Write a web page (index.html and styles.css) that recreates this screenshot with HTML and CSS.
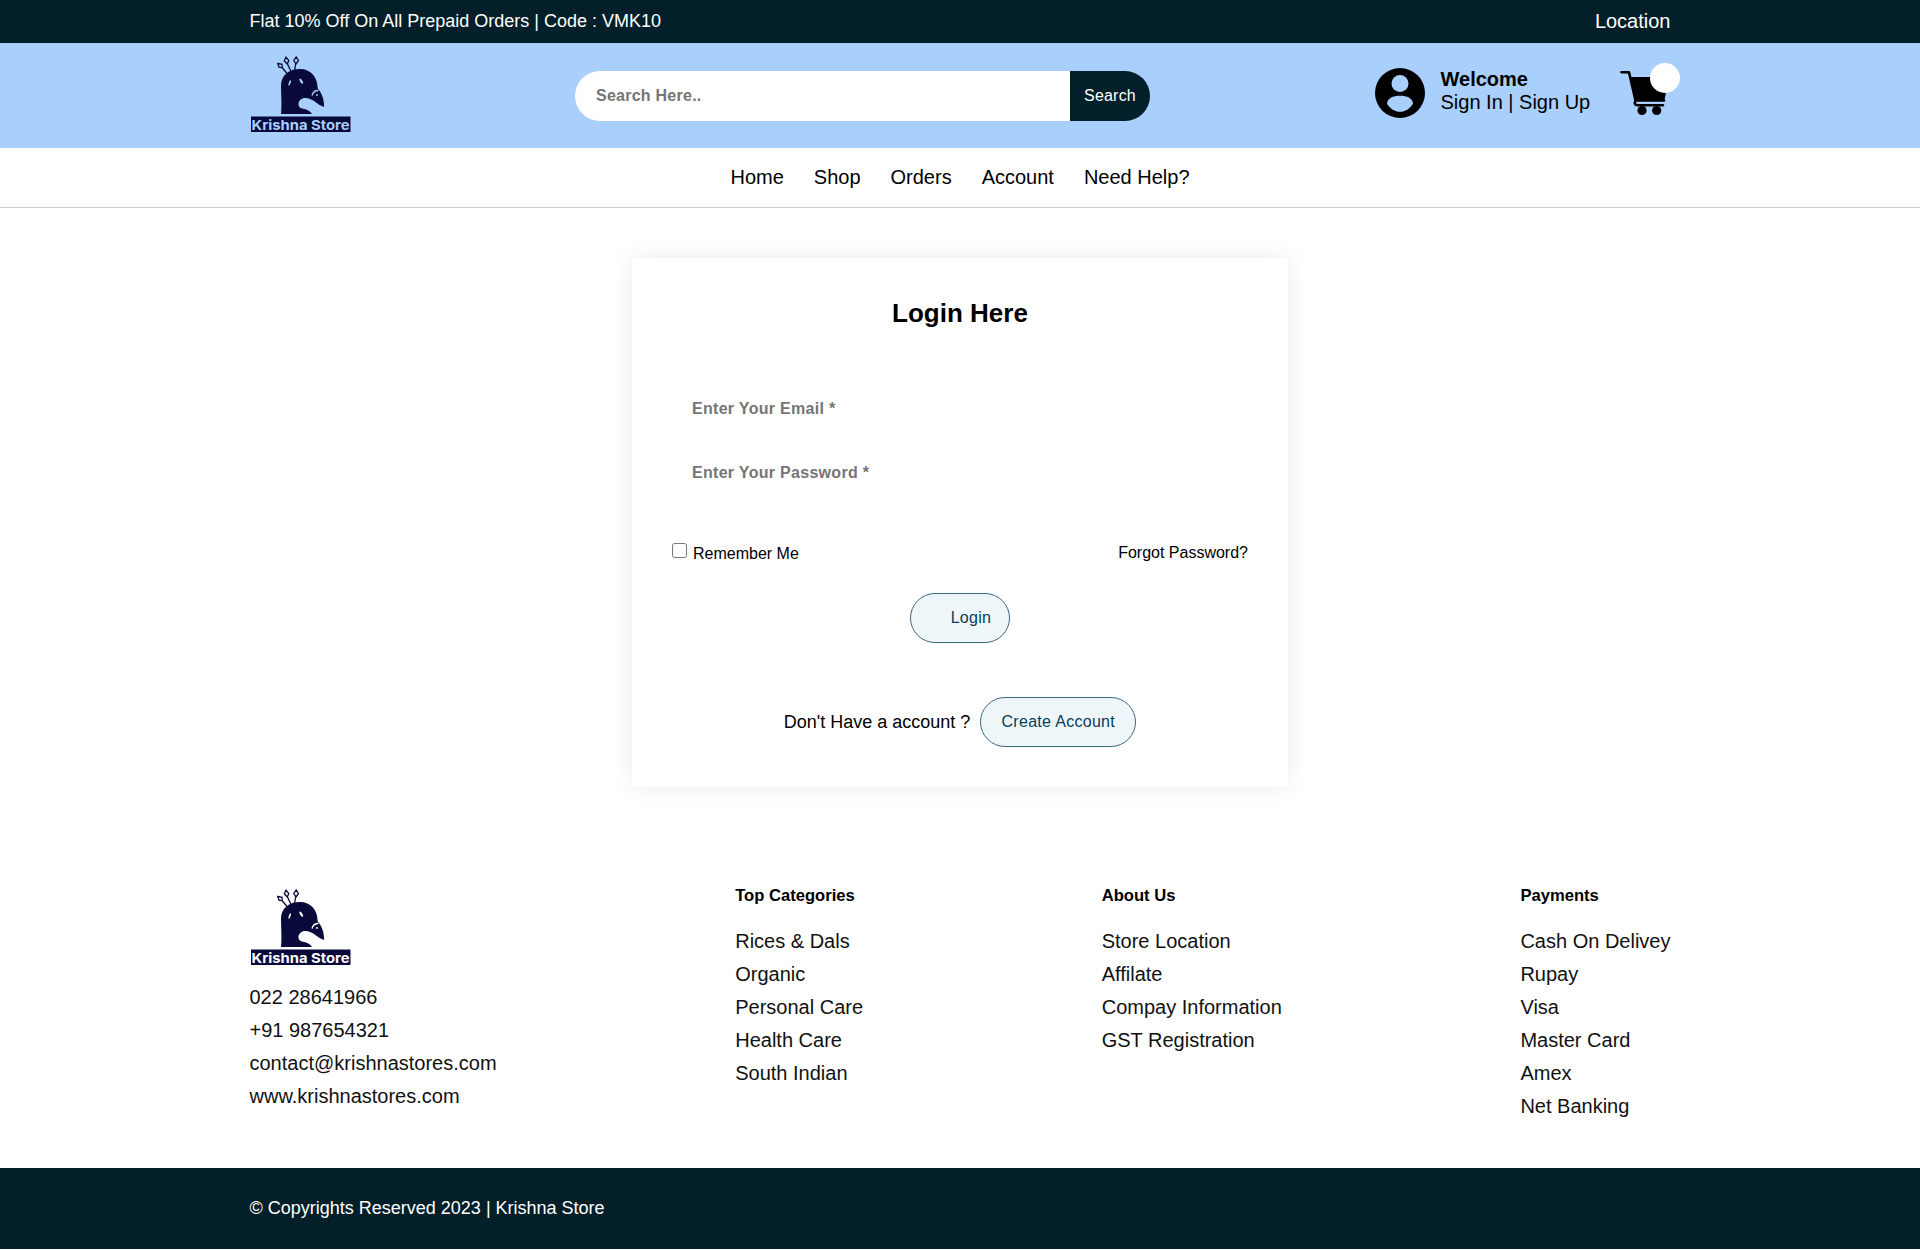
FILE: index.html
```html
<!DOCTYPE html>
<html lang="en">
<head>
<meta charset="utf-8">
<title>Krishna Store</title>
<link rel="stylesheet" href="styles.css">
</head>
<body>
<div class="topbar"><div class="container between">
  <span class="offer">Flat 10% Off On All Prepaid Orders | Code : VMK10</span>
  <a class="location">Location</a>
</div></div>

<header class="header"><div class="container header-row">
  <svg class="logo" viewBox="0 0 102 80">
    <g id="bird">
      <path fill="none" stroke="#090a3b" stroke-width="1.3" d="M37 18.500 32 12.500M41 16.500 37.500 9M44.500 15.500 45.700 9M27.800 8.500 32 9.300 32.300 12.800 29 12.200ZM36 2.200 38.800 5.500 37.300 9 34.300 5.800ZM46.200 2 48.500 5.500 46 9 43.800 5.500Z"/>
      <path fill="#090a3b" d="M31 59C32 50 31 38 31 31C31 20 39 14 50 14C61 14 67.500 22 67.700 33.500C71.500 37 74.500 45 74 52Q70 51 66 47.500Q60 42.500 54 43C47.500 44 46.500 52.500 52 53.500Q59.500 54.500 62 59Z"/>
      <path fill="none" stroke="currentColor" stroke-width="1.300" d="M62 40.500Q63.500 35.300 68.500 35.500"/>
      <g fill="currentColor"><ellipse cx="39.700" cy="28" rx=".9" ry="2.800" transform="rotate(20 39.700 28)"/><ellipse cx="51.200" cy="26.200" rx="1.200" ry="2.900" transform="rotate(-32 51.200 26.200)"/><circle cx="67" cy="40" r=".9"/></g>
      <path fill="#090a3b" d="M1 61.500H100.500V77H1Z"/>
    </g>
    <text class="logo-text" x="1.500" y="75" textLength="98" lengthAdjust="spacingAndGlyphs" fill="currentColor">Krishna Store</text>
  </svg>
  <form class="search">
    <input class="search-input" type="text" placeholder="Search Here..">
    <button class="search-btn" type="button">Search</button>
  </form>
  <div class="user">
    <svg class="avatar" viewBox="0 0 50 50"><circle cx="25" cy="25" r="25"/><circle cx="25" cy="15.500" r="8.500" fill="#a9cffd"/><path fill="#a9cffd" d="M12 35.500C12.500 30 18 27.700 25 27.700S37.500 30 38 35.500C35 41 30 43.800 25 43.800S15 41 12 35.500Z"/></svg>
    <div class="welcome"><strong>Welcome</strong><span>Sign In | Sign Up</span></div>
    <div class="cart">
      <svg class="cart-icon" viewBox="0 0 50 46"><path fill="none" stroke="#000" stroke-width="2.600" stroke-linecap="round" stroke-linejoin="round" d="M1.500 2.300H9L15.500 30.500Q13.500 35 17.500 35.200H43M15.500 30.500H44"/><path d="M10 7H49L44.500 30H15.500Z"/><circle cx="22" cy="40.500" r="4.600"/><circle cx="36.700" cy="40.500" r="4.600"/></svg>
      <span class="badge"></span>
    </div>
  </div>
</div></header>

<nav class="nav"><a>Home</a><a>Shop</a><a>Orders</a><a>Account</a><a>Need Help?</a></nav>

<main class="card">
  <h1 class="title">Login Here</h1>
  <input class="field" type="text" placeholder="Enter Your Email *">
  <input class="field" type="text" placeholder="Enter Your Password *">
  <div class="options">
    <label class="remember"><input class="check" type="checkbox"><span>Remember Me</span></label>
    <a class="forgot">Forgot Password?</a>
  </div>
  <button class="btn login" type="button">Login</button>
  <div class="signup"><span>Don't Have a account ?</span><button class="btn create" type="button">Create Account</button></div>
</main>

<footer>
  <div class="container between footer-cols">
    <div class="contact">
      <svg class="logo on-white" viewBox="0 0 102 80">
        <use href="#bird"/>
        <text class="logo-text" x="1.500" y="75" textLength="98" lengthAdjust="spacingAndGlyphs" fill="currentColor">Krishna Store</text>
      </svg>
      <ul class="list"><li>022 28641966</li><li>+91 987654321</li><li>contact@krishnastores.com</li><li>www.krishnastores.com</li></ul>
    </div>
    <div><h5 class="heading">Top Categories</h5><ul class="list"><li>Rices &amp; Dals</li><li>Organic</li><li>Personal Care</li><li>Health Care</li><li>South Indian</li></ul></div>
    <div><h5 class="heading">About Us</h5><ul class="list"><li>Store Location</li><li>Affilate</li><li>Compay Information</li><li>GST Registration</li></ul></div>
    <div><h5 class="heading">Payments</h5><ul class="list"><li>Cash On Delivey</li><li>Rupay</li><li>Visa</li><li>Master Card</li><li>Amex</li><li>Net Banking</li></ul></div>
  </div>
  <div class="copyright"><div class="container">© Copyrights Reserved 2023 | Krishna Store</div></div>
</footer>
</body>
</html>
```
FILE: styles.css
```css
* { box-sizing: border-box; margin: 0; padding: 0; }
body { font-family: "Liberation Sans", Arial, sans-serif; font-size: 20px; color: #000; background: #fff; }
input, button { font-family: inherit; border: 0; outline: 0; }
.container { width: 1421px; margin: 0 auto; }
.between { display: flex; justify-content: space-between; }

.topbar { height: 43px; background: #021f2a; color: #fff; line-height: 42px; }
.offer { font-size: 18px; line-height: 43px; }

.header { height: 105px; background: #a9cffd; }
.header-row { display: flex; justify-content: space-between; padding-right: 1px; }
.logo { display: block; width: 102px; height: 80px; margin-top: 12px; color: #a9cffd; }
.logo-text { font-family: Inter, sans-serif; font-weight: 700; font-size: 13.500px; }
.search { display: flex; width: 575px; height: 50px; margin: 28px 0 0 -1px; }
.search-input { width: 495px; padding: 0 21px; border-radius: 25px 0 0 25px; background: #fff; font-size: 16px; font-weight: 700; letter-spacing: .25px; }
.search-btn { width: 80px; border-radius: 0 25px 25px 0; background: #021f2a; color: #fff; font-size: 16px; letter-spacing: .2px; }
::placeholder { color: #757575; opacity: 1; }
.user { display: flex; }
.avatar { width: 50px; height: 50px; margin: 25px 16px 0 0; }
.welcome { display: flex; flex-direction: column; width: 150px; margin: 25px 29px 0 0; line-height: 23px; white-space: nowrap; }
.cart { position: relative; width: 50px; margin-top: 27px; }
.cart-icon { width: 50px; height: 46px; }
.badge { position: absolute; top: -7px; right: -10px; width: 30px; height: 30px; border-radius: 50%; background: #fff; }

.nav { display: flex; justify-content: center; gap: 30px; height: 60px; border-bottom: 1px solid #ccc; line-height: 58px; }

.card { display: flex; flex-direction: column; width: 656px; height: 529px; margin: 50px auto 0; padding: 40px; background: #fff; box-shadow: 0 0 24px rgba(0, 0, 0, .08); }
.title { font-size: 26px; line-height: 30px; text-align: center; margin-bottom: 56px; }
.field { height: 50px; margin-bottom: 14px; padding: 0 20px; background: transparent; font-size: 16px; font-weight: 700; letter-spacing: .3px; }
.options { display: flex; justify-content: space-between; height: 20px; margin-top: 31px; font-size: 16px; line-height: 20px; }
.remember { display: flex; gap: 6px; }
.remember span { padding-top: 1px; }
.check { width: 15px; height: 15px; }
.btn { height: 50px; border: 1px solid #3d697d; border-radius: 25px; background: #eff6fa; color: #053d57; font-size: 16px; letter-spacing: .3px; }
.login { width: 100px; margin: 30px auto 0; padding-left: 22px; flex: none; }
.signup { display: flex; align-items: center; justify-content: center; gap: 10px; margin-top: 54px; font-size: 18px; }
.create { width: 156px; }

.footer-cols { height: 381px; padding-top: 101px; }
.contact .logo { margin: 0 0 13px; }
.contact .on-white { color: #fff; }
.heading { font-size: 16.600px; line-height: 19px; margin: -2px 0 20px; }
.list { list-style: none; line-height: 33px; color: #111; }
.copyright { height: 81px; background: #021f2a; color: #fff; font-size: 18px; line-height: 81px; }
```
